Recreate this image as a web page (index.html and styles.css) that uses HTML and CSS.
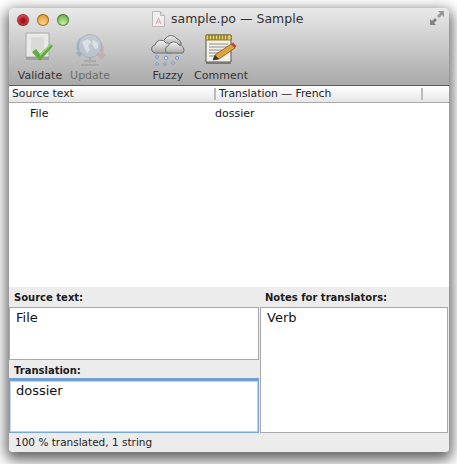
FILE: index.html
```html
<!DOCTYPE html>
<html lang="en">
<head>
  <meta charset="UTF-8" />
  <title>sample.po — Sample</title>
  <link rel="stylesheet" href="styles.css">
</head>
<body>
  <div class="window">
    <div class="chrome">
      <div class="titlebar">
        <div class="lights">
          <span class="light red"></span>
          <span class="light yellow"></span>
          <span class="light green"></span>
        </div>
        <div class="title">
          <svg class="doc" width="13" height="16" viewBox="0 0 13 16">
            <path d="M.5.5h8l4 4v11H.5z" fill="#f1eeee" stroke="#b9b9b9"/>
            <path d="M8.5.5v4h4" fill="#ddd" stroke="#b9b9b9"/>
            <path d="M4 13l2.500-6 2.500 6M4.800 11h3.400" fill="none" stroke="#d9a5a5"/>
          </svg>
          <span>sample.po — Sample</span>
        </div>
        <svg class="fullscreen" width="14" height="14" viewBox="0 0 14 14">
          <path d="M8 0h6v6l-2-2-3 3-2-2 3-3z" fill="#9a9a9a"/>
          <path d="M0 14V8l2 2 3-3 2 2-3 3 2 2z" fill="#808080"/>
        </svg>
      </div>
      <div class="toolbar">
        <div class="tool tool-validate">
          <svg width="36" height="36" viewBox="0 0 36 36">
            <path d="M4 1h23v24H4z" fill="#e9e9e7" stroke="#a9a9a9"/>
            <path d="M4 25h23v3H4z" fill="#8f8f8f" opacity=".6"/>
            <path d="M9 5h13v14H9z" fill="#dadada"/>
            <path d="M10 20l4-3 4 5 10-10 3 2-13 15z" fill="#62ad3e"/>
            <path d="M18 22l10-10 1 1-11 11z" fill="#a4d47f"/>
          </svg>
          <span>Validate</span>
        </div>
        <div class="tool tool-update disabled">
          <svg width="36" height="36" viewBox="0 0 36 36">
            <path d="M7 7A12 12 0 0 0 6 20l-3 1 5 4 3-6-3 1A10 10 0 0 1 12 5z" fill="#7f9cba"/>
            <path d="M28 9a12 12 0 0 1 3 13l3 0-5 6-4-6 3 0a10 10 0 0 0-2-11z" fill="#cf9a9a"/>
            <circle cx="18" cy="14" r="11.500" fill="#b5c4d6" stroke="#8d98a5"/>
            <path d="M10 10l6-3 3 3-3 4 2 4-3 3-3-6zM21 8l5 3 0 5-3 1-3-5z" fill="#eef1f4"/>
            <path d="M18 26v5M9 33h18M12 29h12" stroke="#9a9a9a" stroke-width="2" fill="none"/>
          </svg>
          <span>Update</span>
        </div>
        <div class="tool tool-fuzzy">
          <svg width="36" height="36" viewBox="0 0 36 36">
            <defs>
              <linearGradient id="cloud" x1="0" y1="0" x2="0" y2="1">
                <stop offset="0" stop-color="#f4f4f4"/>
                <stop offset="1" stop-color="#a9a9a9"/>
              </linearGradient>
            </defs>
            <path d="M13 13a5 5 0 0 1 2-6 7 7 0 0 1 12 0 5 5 0 0 1 4 6z" fill="url(#cloud)" stroke="#6e6e6e"/>
            <path d="M3 20a4 4 0 0 1 2-7 6 6 0 0 1 11-2 5 5 0 0 1 6 5v5H5z" fill="url(#cloud)" stroke="#6e6e6e"/>
            <path d="M17 21a4 4 0 0 1 1-7 6 6 0 0 1 11-1 5 5 0 0 1 4 8z" fill="url(#cloud)" stroke="#6e6e6e"/>
            <g fill="#e6effb" stroke="#6f8fc0">
              <circle cx="7" cy="25" r="1.300"/>
              <circle cx="16" cy="26" r="1.800"/>
              <circle cx="27" cy="26" r="1.500"/>
              <circle cx="7" cy="32" r="1.300"/>
              <circle cx="15" cy="32" r="1.300"/>
              <circle cx="23" cy="31" r="1.300"/>
            </g>
          </svg>
          <span>Fuzzy</span>
        </div>
        <div class="tool tool-comment">
          <svg width="36" height="36" viewBox="0 0 36 36">
            <path d="M3 3h25v27H3z" fill="#f4f2e6" stroke="#555"/>
            <path d="M3 30h25v2H3z" fill="#777"/>
            <path d="M3 3h25v5H3z" fill="#ecd55c" stroke="#8a7a2e"/>
            <path d="M6 3v5M9 3v5M12 3v5M15 3v5M18 3v5M21 3v5M24 3v5" stroke="#5c5220"/>
            <path d="M6 12h19M6 15h19M6 18h13M6 21h10M6 24h6" stroke="#8c8c8c"/>
            <path d="M10 28l2-5L28 12l4 4-16 11z" fill="#e0a23c" stroke="#6b4a1c" stroke-width=".7"/>
            <path d="M28 12l2-1.500 3.500 3.500-1.500 2z" fill="#c8453f"/>
            <path d="M10 28l2-5 4 4z" fill="#38302a"/>
          </svg>
          <span>Comment</span>
        </div>
      </div>
    </div>

    <div class="list-header">
      <div class="col col-source">Source text</div>
      <div class="col col-trans">Translation — French</div>
      <div class="col col-rest"></div>
    </div>
    <div class="list">
      <div class="row">
        <div class="cell-source">File</div>
        <div class="cell-trans">dossier</div>
      </div>
    </div>

    <div class="editor">
      <div class="editor-left">
        <div class="label">Source text:</div>
        <div class="field field-source">File</div>
        <div class="label label-trans">Translation:</div>
        <div class="field field-trans">dossier</div>
      </div>
      <div class="editor-right">
        <div class="label">Notes for translators:</div>
        <div class="field field-notes">Verb</div>
      </div>
    </div>
    <div class="statusbar">100 % translated, 1 string</div>
  </div>
</body>
</html>
```

FILE: styles.css
```css
html, body {
  height: 100%;
}

body {
  margin: 0;
  padding: 8px 8px 0 9px;
  box-sizing: border-box;
  background: #fff;
  font-family: 'DejaVu Sans', sans-serif;
  font-size: 11px;
  color: #111;
  overflow: hidden;
}

.window {
  width: 440px;
  height: 444px;
  display: flex;
  flex-direction: column;
  background: #ececec;
  border-radius: 5px 5px 4px 4px;
  overflow: hidden;
  box-shadow: 0 5px 14px 3px rgba(0,0,0,0.62);
}

.chrome {
  height: 77px;
  flex: none;
  background: linear-gradient(#e9e9e9, #a9a9a9);
  border-bottom: 1px solid #595959;
}

.titlebar {
  height: 21px;
  display: flex;
  align-items: center;
  position: relative;
}

.lights {
  display: flex;
  gap: 8px;
  margin-left: 8px;
  margin-top: 2px;
}

.light {
  width: 12px;
  height: 12px;
  border-radius: 50%;
  box-shadow: inset 0 0 0 1px rgba(0,0,0,0.35);
}

.red { background: radial-gradient(circle at 50% 55%, #a5141d 22%, #ee5c62 70%); }
.yellow { background: radial-gradient(circle at 50% 75%, #ffd48a, #e29a2e 75%); }
.green { background: radial-gradient(circle at 50% 75%, #c6eca0, #6cb04a 75%); }

.title {
  position: absolute;
  left: 143px;
  top: 3px;
  display: flex;
  align-items: center;
  gap: 6px;
  font-size: 12.500px;
  color: #333;
  line-height: 16px;
}

.fullscreen {
  position: absolute;
  right: 5px;
  top: 3px;
}

.toolbar {
  display: flex;
  margin-top: 3px;
}

.tool {
  display: flex;
  flex-direction: column;
  align-items: center;
  gap: 1px;
  font-size: 11px;
  color: #333;
}

.tool svg {
  display: block;
}

.tool span {
  line-height: 14px;
}

.disabled { opacity: 0.55; }

.tool-validate { width: 48px; margin-left: 7px; }
.tool-update { width: 48px; margin-left: 2px; }
.tool-fuzzy { width: 36px; margin-left: 36px; }
.tool-comment { width: 54px; margin-left: 8px; }

.list-header {
  height: 16px;
  flex: none;
  display: flex;
  align-items: center;
  background: linear-gradient(#fff, #f5f5f5 45%, #e6e6e6);
  border-bottom: 1px solid #a9a9a9;
  font-size: 10.800px;
  color: #222;
}

.col {
  height: 12px;
  line-height: 12px;
  padding-left: 3px;
  box-sizing: border-box;
}

.col-source { width: 205px; }
.col-trans { width: 207px; border-left: 2px solid #bbb; padding-left: 3px; }
.col-rest { flex: 1; border-left: 2px solid #bbb; }

.list {
  flex: 1;
  background: #fff;
}

.row {
  display: flex;
  height: 21px;
  align-items: center;
  line-height: 14px;
}

.cell-source { width: 206px; padding-left: 21px; box-sizing: border-box; }

.editor {
  height: 146px;
  flex: none;
  display: flex;
  gap: 1px;
  background: #ececec;
}

.editor-left {
  width: 250px;
  display: flex;
  flex-direction: column;
}

.editor-right {
  flex: 1;
  display: flex;
  flex-direction: column;
  margin-right: 1px;
}

.label {
  height: 20px;
  line-height: 21px;
  padding-left: 5px;
  font-weight: bold;
  font-size: 10px;
  color: #1a1a1a;
  box-sizing: border-box;
}

.label-trans { height: 18px; }

.field {
  background: #fff;
  border: 1px solid #a8a8a8;
  box-sizing: border-box;
  padding: 1px 6px;
  font-size: 13px;
  line-height: 17px;
  color: #111;
}

.field-source { height: 53px; }
.field-trans {
  flex: 1;
  border: 1px solid #7aa7d6;
  border-top: 3px solid #6f9fd3;
  box-shadow: inset 0 0 0 1px #bcd4ee;
}
.field-notes { flex: 1; }

.statusbar {
  height: 19px;
  flex: none;
  line-height: 18px;
  padding-left: 6px;
  font-size: 10.500px;
  background: #ececec;
  color: #222;
}
```
